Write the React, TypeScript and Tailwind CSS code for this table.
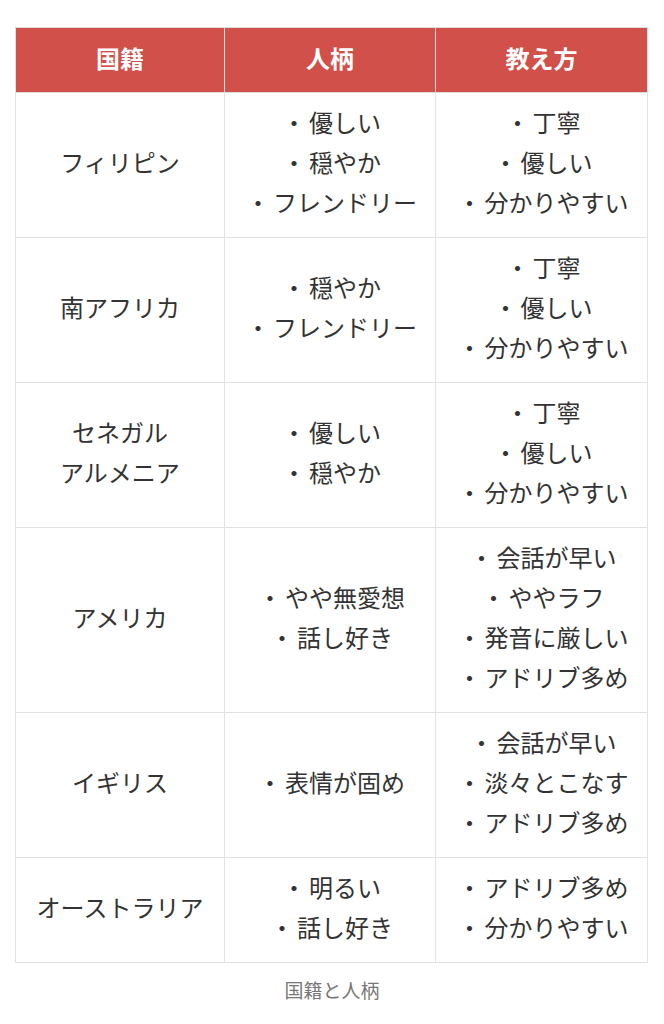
import React from "react";

const rows: { country: string[]; person: string[]; teach: string[] }[] = [
  { country: ["フィリピン"], person: ["・優しい", "・穏やか", "・フレンドリー"], teach: ["・丁寧", "・優しい", "・分かりやすい"] },
  { country: ["南アフリカ"], person: ["・穏やか", "・フレンドリー"], teach: ["・丁寧", "・優しい", "・分かりやすい"] },
  { country: ["セネガル", "アルメニア"], person: ["・優しい", "・穏やか"], teach: ["・丁寧", "・優しい", "・分かりやすい"] },
  { country: ["アメリカ"], person: ["・やや無愛想", "・話し好き"], teach: ["・会話が早い", "・ややラフ", "・発音に厳しい", "・アドリブ多め"] },
  { country: ["イギリス"], person: ["・表情が固め"], teach: ["・会話が早い", "・淡々とこなす", "・アドリブ多め"] },
  { country: ["オーストラリア"], person: ["・明るい", "・話し好き"], teach: ["・アドリブ多め", "・分かりやすい"] },
];

function Lines({ lines }: { lines: string[] }) {
  return (
    <>
      {lines.map((l, i) =>
        l.startsWith("・") ? (
          <div key={i}>
            <span className="inline-block w-[1.25em] text-center">・</span>
            {l.slice(1)}
          </div>
        ) : (
          <div key={i}>{l}</div>
        )
      )}
    </>
  );
}

export default function App() {
  return (
    <div
      className="bg-white w-[664px] min-h-[1024px] pt-[27px]"
      style={{ fontFamily: '"Noto Sans CJK JP", "Noto Sans", sans-serif' }}
    >
      <table className="ml-[15px] w-[633px] border-collapse table-fixed text-[24px] leading-[40px] text-[#333333]">
        <thead>
          <tr className="bg-[#d1504a] text-white font-bold">
            <th className="border border-[#dddddd] pt-[10px] pb-[14px] w-[209px]">国籍</th>
            <th className="border border-[#dddddd] pt-[10px] pb-[14px] w-[211px]">人柄</th>
            <th className="border border-[#dddddd] pt-[10px] pb-[14px]">教え方</th>
          </tr>
        </thead>
        <tbody>
          {rows.map((r, i) => (
            <tr key={i} className="text-center">
              <td className="border border-[#e2e2e2] pt-[9px] pb-[15px] px-1 align-middle">
                <Lines lines={r.country} />
              </td>
              <td className="border border-[#e2e2e2] pt-[9px] pb-[15px] px-1 align-middle">
                <Lines lines={r.person} />
              </td>
              <td className="border border-[#e2e2e2] pt-[9px] pb-[15px] px-1 align-middle">
                <Lines lines={r.teach} />
              </td>
            </tr>
          ))}
        </tbody>
      </table>
      <div className="mt-[12px] text-center text-[19px] leading-[29px] text-[#777777]">国籍と人柄</div>
    </div>
  );
}
